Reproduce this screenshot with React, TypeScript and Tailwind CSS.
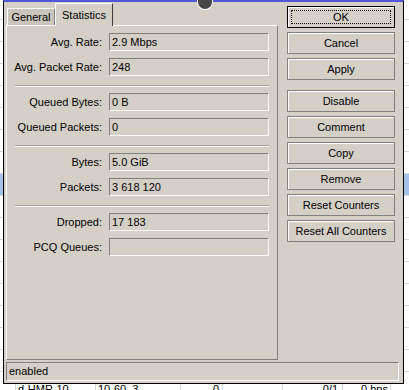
const groups = [
  [
    { label: "Avg. Rate:", value: "2.9 Mbps" },
    { label: "Avg. Packet Rate:", value: "248" },
  ],
  [
    { label: "Queued Bytes:", value: "0 B" },
    { label: "Queued Packets:", value: "0" },
  ],
  [
    { label: "Bytes:", value: "5.0 GiB" },
    { label: "Packets:", value: "3 618 120" },
  ],
  [
    { label: "Dropped:", value: "17 183" },
    { label: "PCQ Queues:", value: "" },
  ],
];

const buttonsTop = ["Cancel", "Apply"];
const buttonsBottom = ["Disable", "Comment", "Copy", "Remove", "Reset Counters", "Reset All Counters"];

function WinButton({ label, focused }: { label: string; focused?: boolean }) {
  return (
    <div
      className={`relative h-[22px] w-[108px] flex items-center justify-center bg-[#d4d0c8] border shadow-[inset_1px_1px_0_#ffffff] ${
        focused ? "border-black" : "border-[#808080]"
      }`}
    >
      {focused && <div className="absolute inset-[3px] border border-dotted border-black" />}
      <span>{label}</span>
    </div>
  );
}

function Field({ label, value }: { label: string; value: string }) {
  return (
    <div className="flex items-center gap-[7px]">
      <div className="w-[95px] text-right whitespace-nowrap">{label}</div>
      <div className="h-[18px] w-[160px] flex items-center pl-[2px] border-t border-l border-[#808080] border-b border-r border-b-white border-r-white">
        {value}
      </div>
    </div>
  );
}

export default function App() {
  const rows = Array.from({ length: 17 }, (_, i) => i);
  return (
    <div className="relative w-[409px] h-[390px] overflow-hidden bg-white text-black text-[11px] leading-[13px] font-['Liberation_Sans',Arial,sans-serif]">
      {/* list behind the dialog */}
      <div className="flex flex-col -mt-[2px]">
        {rows.map((i) => (
          <div
            key={i}
            className={`h-[22px] border-b border-[#d8d8d8] ${i === 8 ? "bg-[#a6c2ea]" : ""}`}
          />
        ))}
        <div className="h-[22px] flex items-start">
          <div className="w-[15px] h-full" />
          <div className="w-[80px] h-full border-l border-[#d8d8d8] pl-[2px] pt-[11px]">d-HMR-10</div>
          <div className="w-[85px] h-full border-l border-[#d8d8d8] pl-[2px] pt-[11px]">10-60_3</div>
          <div className="w-[42px] h-full border-l border-[#d8d8d8] pr-[3px] pt-[11px] text-right">0</div>
          <div className="w-[60px] h-full border-l border-[#d8d8d8]" />
          <div className="w-[60px] h-full border-l border-[#d8d8d8] pr-[4px] pt-[11px] text-right">0/1</div>
          <div className="w-[48px] h-full border-l border-[#d8d8d8] pr-[2px] pt-[11px] text-right">0 bps</div>
          <div className="flex-1 h-full border-l border-[#d8d8d8]" />
        </div>
      </div>

      {/* dialog */}
      <div className="absolute left-[3px] top-0 w-[401px] h-[384px] bg-[#d4d0c8] border-l border-r border-b border-black border-t-2 border-t-[#5058d8] flex flex-col">
        <div className="flex pl-[2px]">
          {/* tabs + panel */}
          <div className="w-[272px] flex flex-col">
            <div className="h-[23px] flex items-end">
              <div className="ml-[1px] w-[48px] h-[17px] bg-[#c9c5bd] border-t border-l border-white border-r border-r-[#808080] flex items-center justify-center">
                General
              </div>
              <div className="relative z-10 -mb-[1px] w-[58px] h-[23px] bg-[#d4d0c8] border-t border-l border-white border-r border-r-[#404040] flex items-center justify-center">
                Statistics
              </div>
            </div>
            <div className="h-[335px] border-t border-l border-white border-r border-b border-r-[#808080] border-b-[#808080] pt-[7px]">
              {groups.map((g, gi) => (
                <div key={gi}>
                  <div className="flex flex-col gap-[7px]">
                    {g.map((f) => (
                      <Field key={f.label} label={f.label} value={f.value} />
                    ))}
                  </div>
                  {gi < groups.length - 1 && (
                    <div className="ml-[8px] w-[254px] mt-[9px] mb-[6px] border-t border-[#a0a0a0] border-b border-b-white" />
                  )}
                </div>
              ))}
            </div>
          </div>

          {/* buttons */}
          <div className="ml-[9px] pt-[4px] flex flex-col gap-[4px]">
            <WinButton label="OK" focused />
            {buttonsTop.map((b) => (
              <WinButton key={b} label={b} />
            ))}
            <div className="h-[2px]" />
            {buttonsBottom.map((b) => (
              <WinButton key={b} label={b} />
            ))}
          </div>
        </div>

        {/* status bar */}
        <div className="ml-[2px] mt-[2px] w-[393px] h-[19px] flex items-center pl-[2px] border-t border-l border-[#808080] border-b border-r border-b-white border-r-white">
          enabled
        </div>
      </div>

      {/* cursor blob on the title edge */}
      <div className="absolute left-[197px] top-0 w-[16px] h-[10px] rounded-b-full bg-[#474747] border border-t-0 border-white" />
    </div>
  );
}
